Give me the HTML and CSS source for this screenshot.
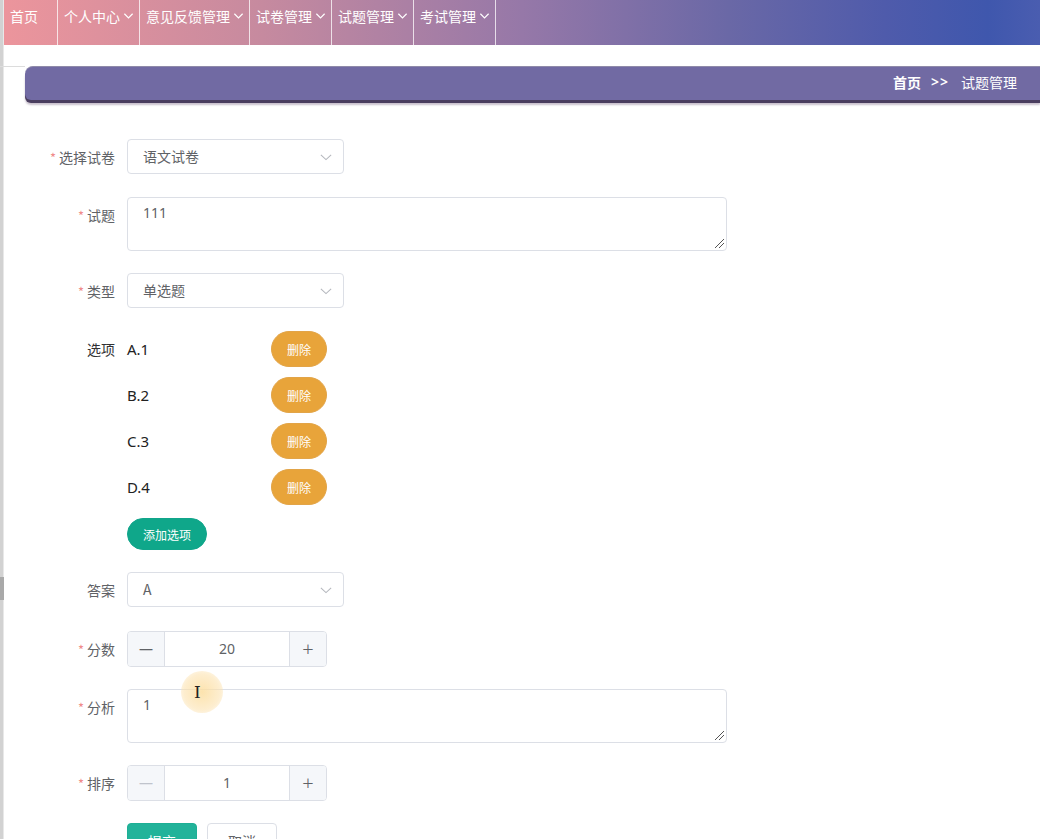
FILE: index.html
```html
<!DOCTYPE html>
<html lang="zh">
<head>
<meta charset="utf-8">
<link rel="stylesheet" href="styles.css">
</head>
<body>
<div class="strip"><div class="thumb"></div></div>
<div class="page">
  <nav class="nav">
    <div class="nav-item">首页</div>
    <div class="nav-item">个人中心<svg class="chev" viewBox="0 0 12 8"><polyline points="1.5,1.5 6,6 10.5,1.5"/></svg></div>
    <div class="nav-item">意见反馈管理<svg class="chev" viewBox="0 0 12 8"><polyline points="1.5,1.5 6,6 10.5,1.5"/></svg></div>
    <div class="nav-item">试卷管理<svg class="chev" viewBox="0 0 12 8"><polyline points="1.5,1.5 6,6 10.5,1.5"/></svg></div>
    <div class="nav-item">试题管理<svg class="chev" viewBox="0 0 12 8"><polyline points="1.5,1.5 6,6 10.5,1.5"/></svg></div>
    <div class="nav-item">考试管理<svg class="chev" viewBox="0 0 12 8"><polyline points="1.5,1.5 6,6 10.5,1.5"/></svg></div>
  </nav>
  <div class="gap-row"><div class="hline"></div></div>
  <div class="crumb">
    <span class="crumb-home">首页</span>
    <span class="crumb-sep">&gt;&gt;</span>
    <span class="crumb-cur">试题管理</span>
  </div>

  <form class="form">
    <div class="row">
      <label class="lbl"><span class="req">*</span>选择试卷</label>
      <div class="select">语文试卷<svg class="sel-arrow" viewBox="0 0 14 8"><polyline points="1,1 7,6.5 13,1"/></svg></div>
    </div>
    <div class="row">
      <label class="lbl"><span class="req">*</span>试题</label>
      <div class="textarea">111<span class="grip"></span></div>
    </div>
    <div class="row">
      <label class="lbl"><span class="req">*</span>类型</label>
      <div class="select">单选题<svg class="sel-arrow" viewBox="0 0 14 8"><polyline points="1,1 7,6.5 13,1"/></svg></div>
    </div>
    <div class="row row-opts">
      <label class="lbl lbl-opt">选项</label>
      <div class="opts">
        <div class="opt"><span class="opt-text">A.1</span><button type="button" class="btn-del">删除</button></div>
        <div class="opt"><span class="opt-text">B.2</span><button type="button" class="btn-del">删除</button></div>
        <div class="opt"><span class="opt-text">C.3</span><button type="button" class="btn-del">删除</button></div>
        <div class="opt"><span class="opt-text">D.4</span><button type="button" class="btn-del">删除</button></div>
        <button type="button" class="btn-add">添加选项</button>
      </div>
    </div>
    <div class="row row-answer">
      <label class="lbl">答案</label>
      <div class="select">A<svg class="sel-arrow" viewBox="0 0 14 8"><polyline points="1,1 7,6.5 13,1"/></svg></div>
    </div>
    <div class="row">
      <label class="lbl"><span class="req">*</span>分数</label>
      <div class="num">
        <span class="num-btn">&#8212;</span>
        <span class="num-val">20</span>
        <span class="num-btn plus">+</span>
      </div>
    </div>
    <div class="row">
      <label class="lbl"><span class="req">*</span>分析</label>
      <div class="textarea">1<span class="grip"></span></div>
    </div>
    <div class="row">
      <label class="lbl"><span class="req">*</span>排序</label>
      <div class="num">
        <span class="num-btn dim">&#8212;</span>
        <span class="num-val">1</span>
        <span class="num-btn plus">+</span>
      </div>
    </div>
    <div class="row actions">
      <button type="button" class="btn-submit">提交</button>
      <button type="button" class="btn-cancel">取消</button>
    </div>
  </form>
  <div class="cursor-halo"></div>
  <div class="cursor-ibeam">I</div>
</div>
</body>
</html>
```

FILE: styles.css
```css
* { box-sizing: border-box; }
html, body { margin: 0; padding: 0; }
body {
  background: #fff;
  font-family: "Noto Sans CJK SC", "Noto Sans", sans-serif;
  width: 1040px;
  height: 839px;
  overflow: hidden;
  position: relative;
}
.strip {
  position: absolute;
  left: 0; top: 0;
  width: 4px; height: 839px;
  background: #d2d2d2;
  border-right: 1px solid #e8e8e8;
}
.thumb {
  position: absolute;
  left: 0; top: 577px;
  width: 4px; height: 23px;
  background: #a9a9a9;
}
.page {
  margin-left: 4px;
  position: relative;
}
.nav {
  display: flex;
  height: 45px;
  background: linear-gradient(90deg, #ec959c 0%, #c68a9f 25%, #9678a8 50%, #6a68a6 70%, #4f5bab 85%, #3f57ad 95%, #4a5db0 100%);
}
.nav-item {
  display: flex;
  align-items: flex-start;
  padding: 6px 5px 0 6px;
  color: #fff;
  font-size: 14px;
  line-height: 20px;
  border-right: 1px solid rgba(255,255,255,0.75);
}
.nav-item:first-child { padding-left: 6px; padding-right: 19px; }
.chev {
  width: 11px; height: 8px;
  margin: 6px 0 0 3px;
  fill: none;
  stroke: #fff;
  stroke-width: 1.3;
}
.gap-row {
  height: 21px;
  position: relative;
}
.hline {
  position: absolute;
  left: -4px; top: 21px;
  width: 25px; height: 1px;
  background: #dcdcdc;
}
.crumb {
  margin-left: 21px;
  height: 34px;
  background: #716aa3;
  border-top: 1px solid #8f8aa9;
  border-radius: 8px 0 0 6px;
  box-shadow: 0 3px 0 #4a3e5f, 0 5px 2px rgba(120,100,130,0.4);
  display: flex;
  justify-content: flex-end;
  align-items: center;
  padding: 0 23px 3px 0;
  color: #fff;
  font-size: 14px;
  line-height: 20px;
}
.crumb-home { font-weight: 700; }
.crumb-sep { margin: 0 12px 0 10px; font-family: "Noto Sans", sans-serif; font-weight: 600; letter-spacing: 1px; }

.form {
  margin-top: 39px;
}
.row {
  display: flex;
  align-items: flex-start;
  margin-bottom: 22px;
}
.lbl {
  width: 123px;
  height: 36px;
  padding-right: 12px;
  text-align: right;
  font-size: 14px;
  color: #606266;
  line-height: 36px;
  flex-shrink: 0;
}
.req {
  color: #f08a8a;
  margin-right: 3px;
  font-size: 13px;
  line-height: 1;
}
.select {
  width: 217px;
  height: 35px;
  margin-bottom: 1px;
  border: 1px solid #dcdfe6;
  border-radius: 4px;
  padding: 0 15px;
  font-size: 14px;
  color: #606266;
  line-height: 33px;
  position: relative;
}
.sel-arrow {
  position: absolute;
  right: 11px; top: 14px;
  width: 12px; height: 7px;
  fill: none;
  stroke: #b4b7bd;
  stroke-width: 1.2;
}
.textarea {
  width: 600px;
  height: 54px;
  border: 1px solid #dcdfe6;
  border-radius: 4px;
  padding: 4px 15px;
  font-size: 14px;
  color: #606266;
  line-height: 21px;
  position: relative;
  font-family: "Noto Sans", sans-serif;
}
.grip {
  position: absolute;
  right: 2px; bottom: 2px;
  width: 9px; height: 9px;
  background: linear-gradient(135deg, transparent 0 45%, #555 45% 52%, transparent 52% 68%, #555 68% 75%, transparent 75%);
}
.lbl-opt { color: #303133; }
.opts {
  display: flex;
  flex-direction: column;
}
.opt {
  display: flex;
  align-items: center;
  height: 36px;
  margin-bottom: 10px;
}
.opt-text {
  width: 144px;
  font-family: "Noto Sans", sans-serif;
  font-size: 15px;
  color: #222;
}
.btn-del {
  width: 56px;
  height: 36px;
  border: 1px solid #e2a448;
  border-radius: 18px;
  background: #e8a43a;
  color: #fff;
  font-size: 12px;
  font-family: "Noto Sans CJK SC", sans-serif;
  padding: 0;
}
.btn-add {
  margin-top: 3px;
  width: 80px;
  height: 32px;
  border: 1px solid #11a58b;
  border-radius: 16px;
  background: #0fa78a;
  color: #fff;
  font-size: 12px;
  font-family: "Noto Sans CJK SC", sans-serif;
  padding: 0;
}
.row-answer { margin-top: 2px; margin-bottom: 23px; }
.num {
  display: flex;
  width: 200px;
  height: 36px;
  border: 1px solid #dcdfe6;
  border-radius: 4px;
  overflow: hidden;
}
.num-btn {
  width: 37px;
  background: #f5f7fa;
  color: #606266;
  text-align: center;
  line-height: 34px;
  font-size: 14px;
  font-family: "Noto Sans", sans-serif;
  flex-shrink: 0;
}
.num-btn:first-child { border-right: 1px solid #dcdfe6; }
.num-btn.dim { color: #c0c4cc; }
.num-btn.plus {
  border-left: 1px solid #dcdfe6;
  font-size: 20px;
  font-weight: 300;
}
.num-val {
  flex: 1;
  text-align: center;
  line-height: 34px;
  font-size: 14px;
  color: #606266;
  font-family: "Noto Sans", sans-serif;
}
.actions {
  padding-left: 123px;
}
.btn-submit {
  width: 70px;
  height: 36px;
  border: 1px solid #1eaf95;
  border-radius: 4px;
  background: #22b39a;
  color: #fff;
  font-size: 14px;
  padding: 0;
  font-family: "Noto Sans CJK SC", sans-serif;
}
.btn-cancel {
  margin-left: 10px;
  width: 70px;
  height: 36px;
  border: 1px solid #dcdfe6;
  border-radius: 4px;
  background: #fff;
  color: #606266;
  font-size: 14px;
  padding: 0;
  font-family: "Noto Sans CJK SC", sans-serif;
}
.cursor-halo {
  position: absolute;
  left: 177px; top: 671px;
  width: 42px; height: 42px;
  border-radius: 50%;
  background: radial-gradient(circle, rgba(252,222,160,0.85) 0%, rgba(252,226,175,0.6) 60%, rgba(255,240,210,0) 100%);
}
.cursor-ibeam {
  position: absolute;
  left: 190px; top: 682px;
  font-family: "DejaVu Serif", serif;
  font-size: 17px;
  line-height: 20px;
  color: #222;
}
```
